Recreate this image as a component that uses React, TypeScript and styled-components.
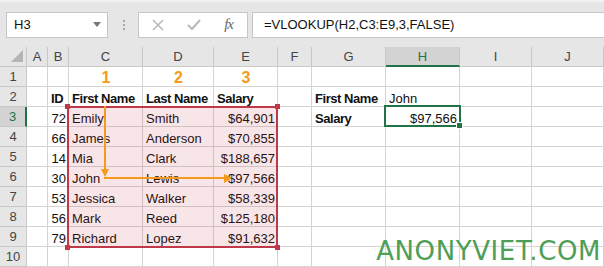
import React from 'react';
import styled, { createGlobalStyle } from 'styled-components';

const GlobalStyle = createGlobalStyle`
    body{
        margin:0;
        font-family:"Liberation Sans", Arial, sans-serif;
        background:#fff;
        overflow:hidden;
    }
`

const Page = styled.div`
    width:604px;
    height:267px;
    overflow:hidden;
    background:#fff;
`
const Toolbar = styled.div`
    display:flex;
    align-items:center;
    height:47px;
    padding:0 0 0 6px;
    box-sizing:border-box;
    background:#e6e6e6;
    border-top:2px solid #f1f1f1;
`
const Box = styled.div`
    display:flex;
    align-items:center;
    height:26px;
    box-sizing:border-box;
    background:#fff;
    border:1px solid #c6c6c6;
    font-size:13px;
    color:#111;
`
const NameBox = styled(Box)`
    width:102px;
    padding:0 6px 0 7px;
    justify-content:space-between;
`
const DropArrow = styled.span`
    width:0;
    height:0;
    border-left:4px solid transparent;
    border-right:4px solid transparent;
    border-top:5px solid #777;
`
const Grip = styled.div`
    display:flex;
    flex-direction:column;
    gap:2px;
    margin:0 13px 0 15px;
    span{
        width:2px;
        height:2px;
        background:#a6a6a6;
    }
`
const FuncBox = styled(Box)`
    width:110px;
    padding:0 14px 0 13px;
    justify-content:space-between;
`
const Fx = styled.span`
    font-family:"Liberation Serif", serif;
    font-style:italic;
    font-size:15px;
    color:#666;
    letter-spacing:-1px;
`
const FormulaBox = styled(Box)`
    flex:1;
    margin-left:4px;
    padding-left:11px;
    border-right:none;
`

const Sheet = styled.div`
    position:relative;
    display:grid;
    grid-template-columns:27px 21px 21px 74px 71px 64px 34px 74px 74px 72px 1fr;
    grid-auto-rows:20px;
`
const Head = styled.div<{$active?:boolean}>`
    box-sizing:border-box;
    display:flex;
    align-items:center;
    justify-content:center;
    font-size:13px;
    background:${p => p.$active ? '#d3d3d3' : '#e6e6e6'};
    color:${p => p.$active ? '#217346' : '#444'};
    border-right:1px solid #c8c8c8;
    border-bottom:1px solid #c8c8c8;
`
const ColHead = styled(Head)`
    border-bottom:${p => p.$active ? '2px solid #217346' : '1px solid #c8c8c8'};
`
const RowHead = styled(Head)`
    border-right:${p => p.$active ? '2px solid #217346' : '1px solid #c8c8c8'};
`
const Corner = styled(Head)`
    position:relative;
    &::after{
        content:'';
        position:absolute;
        right:3px;
        bottom:4px;
        width:12px;
        height:12px;
        background:#b4b4b4;
        clip-path:polygon(100% 0, 100% 100%, 0 100%);
    }
`
const Cell = styled.div<{$align?:string, $bold?:boolean, $color?:string, $big?:boolean}>`
    box-sizing:border-box;
    display:flex;
    align-items:flex-end;
    justify-content:${p => p.$align === 'right' ? 'flex-end' : p.$align === 'center' ? 'center' : 'flex-start'};
    padding:0 2px 0 3px;
    border-right:1px solid #d4d4d4;
    border-bottom:1px solid #d4d4d4;
    font-size:${p => p.$big ? '16px' : '13px'};
    line-height:${p => p.$big ? '17px' : '14px'};
    font-weight:${p => p.$bold ? 700 : 400};
    letter-spacing:${p => p.$bold && !p.$big ? '-0.45px' : '0'};
    color:${p => p.$color || '#111'};
    white-space:nowrap;
    overflow:visible;
`
const RangeBox = styled.div`
    position:absolute;
    left:67px;
    top:59px;
    width:211px;
    height:142px;
    box-sizing:border-box;
    border:2px solid #c0394b;
    background:rgba(200,40,60,0.12);
    pointer-events:none;
`
const Handle = styled.span<{$x:string, $y:string}>`
    position:absolute;
    width:5px;
    height:5px;
    background:#c0394b;
    ${p => p.$x}:-4px;
    ${p => p.$y}:-4px;
`
const ActiveCell = styled.div`
    position:absolute;
    left:384px;
    top:58px;
    width:77px;
    height:22px;
    box-sizing:border-box;
    border:2px solid #217346;
    pointer-events:none;
    &::after{
        content:'';
        position:absolute;
        right:-4px;
        bottom:-4px;
        width:5px;
        height:5px;
        background:#217346;
        border:1px solid #fff;
    }
`
const Arrows = styled.svg`
    position:absolute;
    left:0;
    top:0;
    pointer-events:none;
`
const Watermark = styled.div`
    position:absolute;
    right:3px;
    bottom:2px;
    font-family:"DejaVu Sans", sans-serif;
    font-size:26px;
    line-height:28px;
    letter-spacing:0.6px;
    color:#4e9e56;
`

interface CellData{
    t:string
    a?:string
    b?:boolean
    c?:string
    big?:boolean
}

const cols = ['A','B','C','D','E','F','G','H','I','J']
const orange = '#f59b1b'

const people:[string,string,string,string][] = [
    ['72','Emily','Smith','$64,901'],
    ['66','James','Anderson','$70,855'],
    ['14','Mia','Clark','$188,657'],
    ['30','John','Lewis','$97,566'],
    ['53','Jessica','Walker','$58,339'],
    ['56','Mark','Reed','$125,180'],
    ['79','Richard','Lopez','$91,632'],
]

function buildRows(){
    const rows:Record<string,CellData>[] = []
    rows.push({
        C:{t:'1',a:'center',b:true,c:orange,big:true},
        D:{t:'2',a:'center',b:true,c:orange,big:true},
        E:{t:'3',a:'center',b:true,c:orange,big:true},
    })
    rows.push({
        B:{t:'ID',b:true},
        C:{t:'First Name',b:true},
        D:{t:'Last Name',b:true},
        E:{t:'Salary',b:true},
        G:{t:'First Name',b:true},
        H:{t:'John'},
    })
    people.forEach((p,i) => {
        const r:Record<string,CellData> = {
            B:{t:p[0],a:'right'},
            C:{t:p[1]},
            D:{t:p[2]},
            E:{t:p[3],a:'right'},
        }
        if(i === 0){
            r.G = {t:'Salary',b:true}
            r.H = {t:'$97,566',a:'right'}
        }
        rows.push(r)
    })
    rows.push({})
    return rows
}

const XIcon = () => (
    <svg width="12" height="12" viewBox="0 0 12 12">
        <path d="M1 1 L11 11 M11 1 L1 11" stroke="#b9b9b9" strokeWidth="1.6" fill="none"/>
    </svg>
)
const CheckIcon = () => (
    <svg width="14" height="12" viewBox="0 0 14 12">
        <path d="M1 6 L5 10 L13 1" stroke="#b9b9b9" strokeWidth="2" fill="none"/>
    </svg>
)

const App = () => {
    const rows = buildRows()
    return (
        <Page>
            <GlobalStyle/>
            <Toolbar>
                <NameBox>H3<DropArrow/></NameBox>
                <Grip><span/><span/><span/></Grip>
                <FuncBox><XIcon/><CheckIcon/><Fx>fx</Fx></FuncBox>
                <FormulaBox>=VLOOKUP(H2,C3:E9,3,FALSE)</FormulaBox>
            </Toolbar>
            <Sheet>
                <Corner/>
                {cols.map(c => <ColHead key={c} $active={c === 'H'}>{c}</ColHead>)}
                {rows.map((row,i) => (
                    <React.Fragment key={i}>
                        <RowHead $active={i === 2}>{i+1}</RowHead>
                        {cols.map(c => {
                            const d = row[c]
                            return (
                                <Cell key={c} $align={d?.a} $bold={d?.b} $color={d?.c} $big={d?.big}>
                                    {d ? d.t : ''}
                                </Cell>
                            )
                        })}
                    </React.Fragment>
                ))}
                <RangeBox>
                    <Handle $x="left" $y="top"/>
                    <Handle $x="right" $y="top"/>
                    <Handle $x="left" $y="bottom"/>
                    <Handle $x="right" $y="bottom"/>
                </RangeBox>
                <ActiveCell/>
                <Arrows width="604" height="220">
                    <path d="M105 59 L105 123" stroke={orange} strokeWidth="2" fill="none"/>
                    <path d="M101 122 L109 122 L105 130 Z" fill={orange}/>
                    <path d="M104 131 L225 131" stroke={orange} strokeWidth="2" fill="none"/>
                    <path d="M224 127 L232 131 L224 136 Z" fill={orange}/>
                </Arrows>
                <Watermark>ANONYVIET.COM</Watermark>
            </Sheet>
        </Page>
    );
};

export default App;
